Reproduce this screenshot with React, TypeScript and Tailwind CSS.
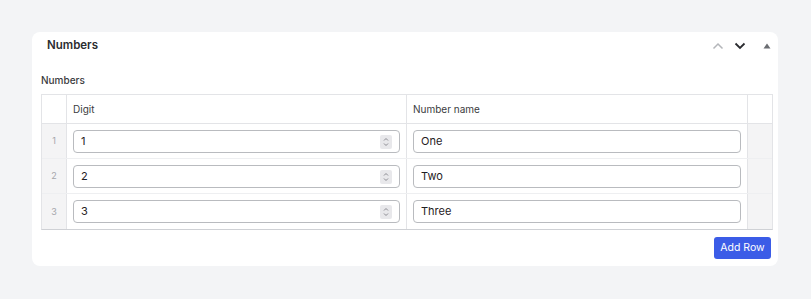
import React from "react";

const rows = [
  { n: 1, d: "1", name: "One" },
  { n: 2, d: "2", name: "Two" },
  { n: 3, d: "3", name: "Three" },
];

function Spinner() {
  return (
    <div className="absolute right-[7px] top-[4px] w-[12px] h-[14px] bg-[#e8e8eb] rounded-[2px] flex flex-col items-center justify-center">
      <svg width="8" height="12" viewBox="0 0 8 12" fill="none" stroke="#8a8a90" strokeWidth="1">
        <path d="M2 4.5 L4 2.5 L6 4.5" />
        <path d="M2 7.5 L4 9.5 L6 7.5" />
      </svg>
    </div>
  );
}

export default function App() {
  return (
    <div
      className="w-[811px] h-[299px] bg-[#f3f4f6] pt-[32px] pl-[32px]"
      style={{ fontFamily: "Inter, 'Liberation Sans', sans-serif" }}
    >
      <div className="w-[746px] h-[234px] bg-white rounded-[8px] flex flex-col">
        <div className="h-[26px] mt-[1px] flex items-center pl-[15px] pr-[7px]">
          <span className="text-[11.5px] font-semibold text-[#2b2c30]">Numbers</span>
          <div className="ml-auto flex items-center">
            <svg width="12" height="8" viewBox="0 0 12 8" fill="none" stroke="#b4b6ba" strokeWidth="1.5" className="mr-[10px]">
              <path d="M1.5 6.5 L6 2 L10.5 6.5" />
            </svg>
            <svg width="12" height="8" viewBox="0 0 12 8" fill="none" stroke="#2a2b2f" strokeWidth="1.8" className="mr-[17px]">
              <path d="M1.5 1.5 L6 6 L10.5 1.5" />
            </svg>
            <svg width="8" height="6" viewBox="0 0 8 6" fill="#6b6d72">
              <path d="M4 0.5 L7.5 5.5 L0.5 5.5 Z" />
            </svg>
          </div>
        </div>
        <div className="pl-[9px] mt-[13px] h-[16px] flex items-center text-[10px] font-medium text-[#3a3b40]">
          Numbers
        </div>
        <div className="ml-[9px] mt-[6px] w-[732px] border border-[#e3e4e7] border-b-[#cfd1d5] text-[10px] text-[#1f2023]">
          <div className="grid grid-cols-[25px_340px_341px_1fr] h-[29px] border-b border-[#e3e4e7]">
            <div className="border-r border-[#e3e4e7]" />
            <div className="border-r border-[#e3e4e7] flex items-center pl-[6px] text-[#3a3b40]">Digit</div>
            <div className="border-r border-[#e3e4e7] flex items-center pl-[6px] text-[#3a3b40]">Number name</div>
            <div />
          </div>
          {rows.map((r, i) => (
            <div
              key={r.n}
              className={`grid grid-cols-[25px_340px_341px_1fr] h-[35px] ${i < rows.length - 1 ? "border-b border-[#eeeff1]" : ""}`}
            >
              <div className="bg-[#f4f4f5] border-r border-[#e3e4e7] flex items-center justify-center text-[#a4a6ab] text-[9px]">
                {r.n}
              </div>
              <div className="border-r border-[#e3e4e7] flex items-center px-[6px]">
                <div className="relative w-full h-[23px] border border-[#b9bbbf] rounded-[4px] flex items-center pl-[7px] text-[11px]">
                  {r.d}
                  <Spinner />
                </div>
              </div>
              <div className="border-r border-[#e3e4e7] flex items-center px-[6px]">
                <div className="w-full h-[23px] border border-[#b9bbbf] rounded-[4px] flex items-center pl-[7px] text-[11px]">
                  {r.name}
                </div>
              </div>
              <div className="bg-[#f4f4f5]" />
            </div>
          ))}
        </div>
        <div className="flex justify-end pr-[7px] mt-[7px]">
          <button className="w-[57px] h-[22px] bg-[#3b5ce7] rounded-[3px] text-white text-[10.5px] flex items-center justify-center">
            Add Row
          </button>
        </div>
      </div>
    </div>
  );
}
